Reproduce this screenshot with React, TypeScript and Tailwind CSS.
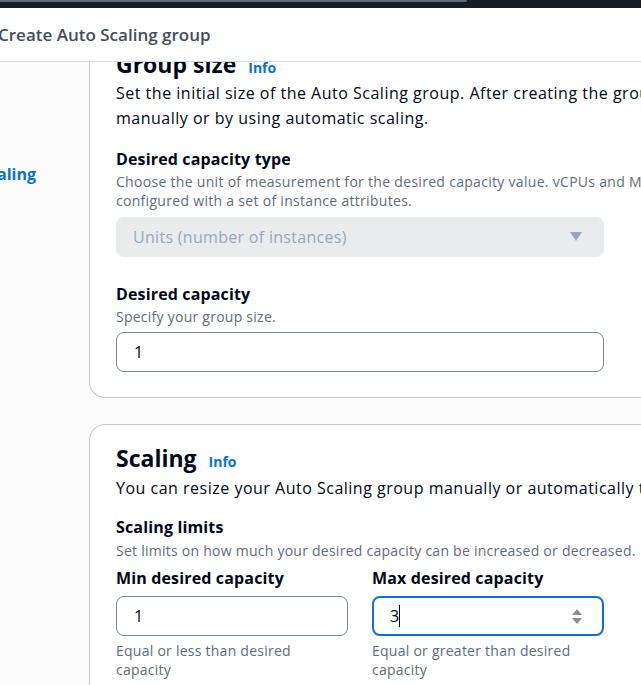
const font = { fontFamily: '"Open Sans", "Noto Sans", sans-serif' };

function Info() {
  return <span className="ml-3 text-sm font-bold tracking-normal text-[#0972d3]">Info</span>;
}

export default function App() {
  return (
    <div className="w-[641px] h-[685px] overflow-hidden bg-[#fbfbfb] flex flex-col" style={font}>
      {/* top nav strip */}
      <div className="h-2 bg-[#161d26] shrink-0">
        <div className="h-[2px] w-[467px] bg-[#5f6b7a] rounded-br-md" />
      </div>

      {/* breadcrumb header */}
      <div className="h-[54px] shrink-0 bg-white border-b border-[#d5dbdb] flex items-center">
        <h1 className="text-[17px] font-semibold text-[#414d5c] -ml-[2px] whitespace-nowrap">
          Create Auto Scaling group
        </h1>
      </div>

      <div className="flex-1 flex overflow-hidden">
        {/* side nav */}
        <div className="w-[89px] shrink-0 overflow-hidden">
          <div className="mt-[100px] -ml-[20px] whitespace-nowrap text-base font-bold text-[#0972d3]">
            Scaling
          </div>
        </div>

        {/* content */}
        <div className="flex flex-col gap-[26px] -mt-[13px]">
          {/* group size */}
          <section className="w-[720px] bg-white border border-[#c6c6cd] rounded-b-2xl border-t-0 pl-[26px] pb-[25px]">
            <h2 className="flex items-baseline text-[23px] font-bold leading-[30px] text-[#000716] whitespace-nowrap">
              Group size <Info />
            </h2>
            <p className="mt-[2px] text-base leading-[25px] tracking-[0.5px] text-[#000716] whitespace-nowrap">
              Set the initial size of the Auto Scaling group. After creating the group, you can change its size
              <br />
              manually or by using automatic scaling.
            </p>

            <div className="w-[488px] mt-[18px] flex flex-col">
              <span className="text-base font-bold leading-5 tracking-[0.15px] text-[#000716]">
                Desired capacity type
              </span>
              <span className="mt-[3px] text-sm leading-[19px] tracking-[0.3px] text-[#5f6b7a] whitespace-nowrap">
                Choose the unit of measurement for the desired capacity value. vCPUs and Memory(MiB) can be
                <br />
                configured with a set of instance attributes.
              </span>
              <div className="mt-[7px] h-10 rounded-lg bg-[#e9ebed] flex items-center justify-between pl-[17px] pr-[22px]">
                <span className="text-base tracking-[0.3px] text-[#9ba7b6]">Units (number of instances)</span>
                <svg width="12" height="10" viewBox="0 0 12 10">
                  <path d="M0 0h12L6 9z" fill="#9ba7b6" />
                </svg>
              </div>

              <span className="mt-[27px] text-base font-bold leading-5 tracking-[0.15px] text-[#000716]">
                Desired capacity
              </span>
              <span className="mt-[3px] text-sm leading-[19px] tracking-[0.25px] text-[#5f6b7a]">
                Specify your group size.
              </span>
              <div className="mt-[6px] h-10 rounded-lg border border-[#7d8998] flex items-center px-[17px] text-base text-[#000716]">
                1
              </div>
            </div>
          </section>

          {/* scaling */}
          <section className="w-[720px] bg-white border border-[#c6c6cd] rounded-t-2xl border-b-0 pl-[26px] pt-[18px] pb-10">
            <h2 className="flex items-baseline text-[23px] font-bold leading-[30px] text-[#000716]">
              Scaling <Info />
            </h2>
            <p className="mt-[3px] text-base leading-6 tracking-[0.5px] text-[#000716] whitespace-nowrap">
              You can resize your Auto Scaling group manually or automatically to meet changes in demand.
            </p>

            <div className="w-[488px] mt-[17px] flex flex-col">
              <span className="text-base font-bold leading-5 tracking-[0.15px] text-[#000716]">Scaling limits</span>
              <span className="mt-1 text-sm leading-5 tracking-[0.25px] text-[#5f6b7a] whitespace-nowrap">
                Set limits on how much your desired capacity can be increased or decreased.
              </span>

              <div className="mt-[6px] grid grid-cols-2 gap-6">
                <div className="flex flex-col">
                  <span className="text-base font-bold leading-[22px] tracking-[0.15px] text-[#000716]">
                    Min desired capacity
                  </span>
                  <div className="mt-[7px] h-10 rounded-lg border border-[#7d8998] flex items-center px-[17px] text-base text-[#000716]">
                    1
                  </div>
                  <span className="mt-[5px] text-sm leading-[19px] tracking-[0.25px] text-[#5f6b7a]">
                    Equal or less than desired capacity
                  </span>
                </div>
                <div className="flex flex-col">
                  <span className="text-base font-bold leading-[22px] tracking-[0.15px] text-[#000716]">
                    Max desired capacity
                  </span>
                  <div className="mt-[7px] h-10 rounded-lg border-2 border-[#0972d3] flex items-center justify-between pl-4 pr-[20px] text-base text-[#000716]">
                    <span className="flex items-center">
                      3<span className="inline-block w-px h-[22px] bg-[#000716]" />
                    </span>
                    <span className="flex flex-col items-center gap-[3px]">
                      <svg width="10" height="6" viewBox="0 0 10 6">
                        <path d="M5 0L10 6H0z" fill="#8d8d8d" />
                      </svg>
                      <svg width="10" height="6" viewBox="0 0 10 6">
                        <path d="M0 0h10L5 6z" fill="#8d8d8d" />
                      </svg>
                    </span>
                  </div>
                  <span className="mt-[5px] text-sm leading-[19px] tracking-[0.25px] text-[#5f6b7a]">
                    Equal or greater than desired capacity
                  </span>
                </div>
              </div>
            </div>
          </section>
        </div>
      </div>
    </div>
  );
}
